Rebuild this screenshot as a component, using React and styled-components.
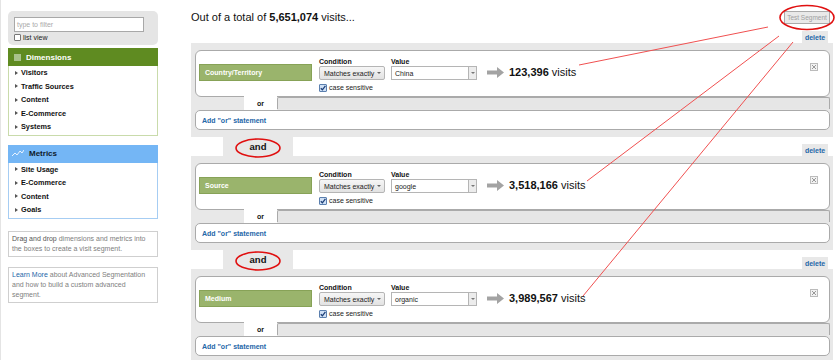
import React from 'react';
import styled, { createGlobalStyle } from 'styled-components';

const GlobalStyle = createGlobalStyle`
  body {
    margin: 0;
    background: #fff;
    font-family: 'Liberation Sans', Arial, sans-serif;
    color: #111;
  }
`;

const Page = styled.div`
  position: relative;
  display: flex;
  width: 835px;
  height: 360px;
  overflow: hidden;
  padding-left: 7px;
  box-sizing: border-box;
  border-left: 1px solid #e4e4e4;
`;

const Sidebar = styled.div`
  width: 150px;
  flex-shrink: 0;
  padding-top: 11px;
`;

const FilterBox = styled.div`
  background: #e5e5e5;
  border-radius: 5px;
  padding: 6px 6px 4px;
  height: 34px;
  box-sizing: border-box;
`;

const FilterInput = styled.div`
  width: 130px;
  height: 15px;
  box-sizing: border-box;
  background: #fff;
  border: 1px solid #a8a8a8;
  font-size: 7px;
  color: #aaa;
  padding: 3px 2px;
`;

const ListView = styled.div`
  display: flex;
  align-items: center;
  gap: 2px;
  margin-top: 2px;
  font-size: 7px;
  color: #222;
`;

const EmptyBox = styled.span`
  width: 7px;
  height: 7px;
  box-sizing: border-box;
  border: 1px solid #777;
  background: #fff;
  border-radius: 1px;
`;

const Panel = styled.div`
  margin-top: ${(p) => p.$gap}px;
`;

const PanelHeader = styled.div`
  height: 18px;
  display: flex;
  align-items: center;
  gap: 5px;
  padding-left: ${(p) => (p.$blue ? 4 : 6)}px;
  background: ${(p) => (p.$blue ? '#74b6f5' : '#5f8b21')};
  color: ${(p) => (p.$blue ? '#0f1a2a' : '#fff')};
  font-size: 8px;
  font-weight: bold;
`;

const HeaderSquare = styled.span`
  width: 7px;
  height: 7px;
  background: #a8c28a;
`;

const PanelList = styled.ul`
  list-style: none;
  margin: 0;
  padding: 0 0 1px;
  border: 1px solid ${(p) => (p.$blue ? '#a6cdf3' : '#c9dbab')};
  border-top: none;
`;

const PanelItem = styled.li`
  display: flex;
  align-items: center;
  height: 13.5px;
  padding-left: 6px;
  font-size: 7.3px;
  font-weight: bold;
  color: #111;

  &::before {
    content: '';
    border-left: 3px solid #555;
    border-top: 2px solid transparent;
    border-bottom: 2px solid transparent;
    margin-right: 3px;
  }
`;

const InfoBox = styled.div`
  margin-top: ${(p) => p.$gap}px;
  border: 1px solid #cfcfcf;
  padding: 2px 3px;
  font-size: 7px;
  line-height: 10px;
  color: #808080;
`;

const Dark = styled.span`
  color: #555;
`;

const BlueLink = styled.span`
  color: #2566a8;
`;

const Main = styled.div`
  width: 642px;
  margin-left: 33px;
  flex-shrink: 0;
`;

const Header = styled.div`
  height: 31px;
  display: flex;
  justify-content: space-between;
  align-items: flex-start;
`;

const Title = styled.div`
  padding-top: 11px;
  font-size: 11px;
  line-height: 13px;
  color: #111;

  b {
    font-weight: bold;
  }
`;

const TestButton = styled.div`
  margin-top: 11px;
  margin-right: 3px;
  width: 46px;
  height: 13px;
  box-sizing: border-box;
  border: 1px solid #aaa;
  background: #e9e9e9;
  color: #a0a0a0;
  font-size: 6.5px;
  white-space: nowrap;
  display: flex;
  align-items: center;
  justify-content: center;
`;

const Connector = styled.div`
  height: ${(p) => (p.$first ? 12 : 19)}px;
  display: flex;
  justify-content: space-between;
  align-items: flex-end;
`;

const AndTab = styled.div`
  margin-left: 32px;
  width: 70px;
  height: 19px;
  background: #e8e8e8;
  display: flex;
  align-items: center;
  justify-content: center;
  font-size: 9.5px;
  font-weight: bold;
  color: #111;
`;

const DeleteTab = styled.div`
  margin-left: auto;
  margin-right: 5px;
  width: 26px;
  height: 12px;
  background: #e8e8e8;
  color: #2566a8;
  font-size: 7px;
  font-weight: bold;
  display: flex;
  align-items: center;
  justify-content: center;
`;

const GroupBox = styled.div`
  background: #e8e8e8;
  padding: 7px 3px 7px 4px;
`;

const Card = styled.div`
  height: 47px;
  box-sizing: border-box;
  background: #fff;
  border: 1px solid #aaa;
  border-radius: 6px;
  display: flex;
  align-items: flex-start;
  padding: 6px 0 0 3px;
`;

const DimLabel = styled.div`
  margin-top: 7px;
  width: 113px;
  height: 17px;
  box-sizing: border-box;
  background: #9ab46c;
  border: 1px solid #87a257;
  color: #fff;
  font-size: 7px;
  font-weight: bold;
  display: flex;
  align-items: center;
  padding-left: 5px;
`;

const Field = styled.div`
  margin-left: ${(p) => p.$ml}px;
  display: flex;
  flex-direction: column;
`;

const FieldLabel = styled.div`
  font-size: 7px;
  font-weight: bold;
  line-height: 9px;
  color: #111;
`;

const Select = styled.div`
  width: 66px;
  height: 14px;
  box-sizing: border-box;
  border: 1px solid #b5b5b5;
  border-radius: 2px;
  background: linear-gradient(#f6f6f6, #e2e2e2);
  font-size: 7px;
  color: #222;
  display: flex;
  align-items: center;
  padding-left: 4px;
  gap: 3px;

  &::after {
    content: '';
    border-top: 2px solid #666;
    border-left: 2px solid transparent;
    border-right: 2px solid transparent;
  }
`;

const CaseRow = styled.div`
  margin-top: 3px;
  display: flex;
  align-items: center;
  gap: 2px;
  font-size: 7px;
  color: #222;
  height: 9px;
`;

const CheckBox = styled.span`
  width: 8px;
  height: 8px;
  box-sizing: border-box;
  border: 1px solid #5b7fae;
  background: #cfe0f5;
  border-radius: 1px;
  display: flex;
  align-items: center;
  justify-content: center;
`;

const ValueRow = styled.div`
  display: flex;
`;

const ValueInput = styled.div`
  width: 77px;
  height: 14px;
  box-sizing: border-box;
  border: 1px solid #b5b5b5;
  border-right: none;
  background: #fff;
  font-size: 7px;
  color: #222;
  padding: 3px 3px;
`;

const ValueButton = styled.div`
  width: 9px;
  height: 14px;
  box-sizing: border-box;
  border: 1px solid #b5b5b5;
  background: #ececec;
  display: flex;
  align-items: center;
  justify-content: center;

  &::after {
    content: '';
    border-top: 2px solid #777;
    border-left: 2px solid transparent;
    border-right: 2px solid transparent;
  }
`;

const Result = styled.div`
  margin-left: 10px;
  margin-top: 9px;
  display: flex;
  align-items: center;
  gap: 4px;
  font-size: 11px;
  color: #111;
`;

const CloseBox = styled.div`
  margin-left: auto;
  margin-right: 11px;
  margin-top: 6px;
  width: 8px;
  height: 8px;
  box-sizing: border-box;
  border: 1px solid #bbb;
  background: #f2f2f2;
  display: flex;
  align-items: center;
  justify-content: center;
`;

const OrRow = styled.div`
  height: 13px;
  display: flex;
`;

const OrSpacer = styled.div`
  width: 49px;
`;

const OrTab = styled.div`
  width: 33px;
  margin-top: -1px;
  background: #fff;
  display: flex;
  align-items: center;
  justify-content: center;
  font-size: 7px;
  font-weight: bold;
  color: #111;
`;

const OrBar = styled.div`
  flex: 1;
  height: 12px;
  box-sizing: border-box;
  border: 1px solid #aaa;
  border-bottom: none;
  border-radius: 2px 2px 0 0;
  background: #e6e6e6;
`;

const AddOrCard = styled.div`
  height: 20px;
  box-sizing: border-box;
  background: #fff;
  border: 1px solid #aaa;
  border-radius: 5px;
  display: flex;
  align-items: center;
  padding-left: 6px;
  font-size: 7px;
  font-weight: bold;
  color: #2566a8;
`;

const Overlay = styled.svg`
  position: absolute;
  top: 0;
  left: 0;
  pointer-events: none;
`;

const segments = [
  { dim: 'Country/Territory', value: 'China', count: '123,396' },
  { dim: 'Source', value: 'google', count: '3,518,166' },
  { dim: 'Medium', value: 'organic', count: '3,989,567' },
];

const ArrowIcon = () => (
  <svg width="18" height="11" viewBox="0 0 18 11">
    <polygon points="0,3.5 10,3.5 10,0 17,5.5 10,11 10,7.5 0,7.5" fill="#a3a3a3" />
  </svg>
);

const Segment = ({ first, dim, value, count }) => (
  <>
    <Connector $first={first}>
      {!first && <AndTab>and</AndTab>}
      <DeleteTab>delete</DeleteTab>
    </Connector>
    <GroupBox>
      <Card>
        <DimLabel>{dim}</DimLabel>
        <Field $ml={7}>
          <FieldLabel>Condition</FieldLabel>
          <Select>Matches exactly</Select>
          <CaseRow>
            <CheckBox>
              <svg width="6" height="6" viewBox="0 0 6 6">
                <path d="M0.8 3.2 L2.4 4.8 L5.4 0.8" stroke="#1d3f78" strokeWidth="1.3" fill="none" />
              </svg>
            </CheckBox>
            case sensitive
          </CaseRow>
        </Field>
        <Field $ml={6}>
          <FieldLabel>Value</FieldLabel>
          <ValueRow>
            <ValueInput>{value}</ValueInput>
            <ValueButton />
          </ValueRow>
        </Field>
        <Result>
          <ArrowIcon />
          <span>
            <b>{count}</b> visits
          </span>
        </Result>
        <CloseBox>
          <svg width="6" height="6" viewBox="0 0 6 6">
            <path d="M1 1 L5 5 M5 1 L1 5" stroke="#999" strokeWidth="1" />
          </svg>
        </CloseBox>
      </Card>
      <OrRow>
        <OrSpacer />
        <OrTab>or</OrTab>
        <OrBar />
      </OrRow>
      <AddOrCard>Add "or" statement</AddOrCard>
    </GroupBox>
  </>
);

const Annotations = () => (
  <Overlay width="835" height="360" viewBox="0 0 835 360">
    <g stroke="#f05050" strokeWidth="1" fill="none">
      <line x1="767" y1="27" x2="578" y2="65" />
      <line x1="778" y1="36" x2="586" y2="181" />
      <line x1="792" y1="42" x2="582" y2="296" />
    </g>
    <g stroke="#e01010" strokeWidth="1.6" fill="none">
      <ellipse cx="806" cy="17.5" rx="27" ry="12" />
      <ellipse cx="257" cy="148" rx="22" ry="9" />
      <ellipse cx="257" cy="261" rx="22" ry="9" />
    </g>
  </Overlay>
);

const App = () => (
  <Page>
    <GlobalStyle />
    <Sidebar>
      <FilterBox>
        <FilterInput>type to filter</FilterInput>
        <ListView>
          <EmptyBox />
          list view
        </ListView>
      </FilterBox>
      <Panel $gap={3}>
        <PanelHeader>
          <HeaderSquare />
          Dimensions
        </PanelHeader>
        <PanelList>
          {['Visitors', 'Traffic Sources', 'Content', 'E-Commerce', 'Systems'].map((t) => (
            <PanelItem key={t}>{t}</PanelItem>
          ))}
        </PanelList>
      </Panel>
      <Panel $gap={9}>
        <PanelHeader $blue>
          <svg width="12" height="7" viewBox="0 0 12 7">
            <polyline points="0,6 3,3 5,5 8,1 10,3 12,0" stroke="#e8f2ff" strokeWidth="1" fill="none" />
          </svg>
          Metrics
        </PanelHeader>
        <PanelList $blue>
          {['Site Usage', 'E-Commerce', 'Content', 'Goals'].map((t) => (
            <PanelItem key={t}>{t}</PanelItem>
          ))}
        </PanelList>
      </Panel>
      <InfoBox $gap={12}>
        <Dark>Drag and drop</Dark> dimensions and metrics into the boxes to create a visit segment.
      </InfoBox>
      <InfoBox $gap={10}>
        <BlueLink>Learn More</BlueLink> about Advanced Segmentation and how to build a custom advanced segment.
      </InfoBox>
    </Sidebar>
    <Main>
      <Header>
        <Title>
          Out of a total of <b>5,651,074</b> visits...
        </Title>
        <TestButton>Test Segment</TestButton>
      </Header>
      {segments.map((s, i) => (
        <Segment key={s.dim} first={i === 0} {...s} />
      ))}
    </Main>
    <Annotations />
  </Page>
);

export default App;
